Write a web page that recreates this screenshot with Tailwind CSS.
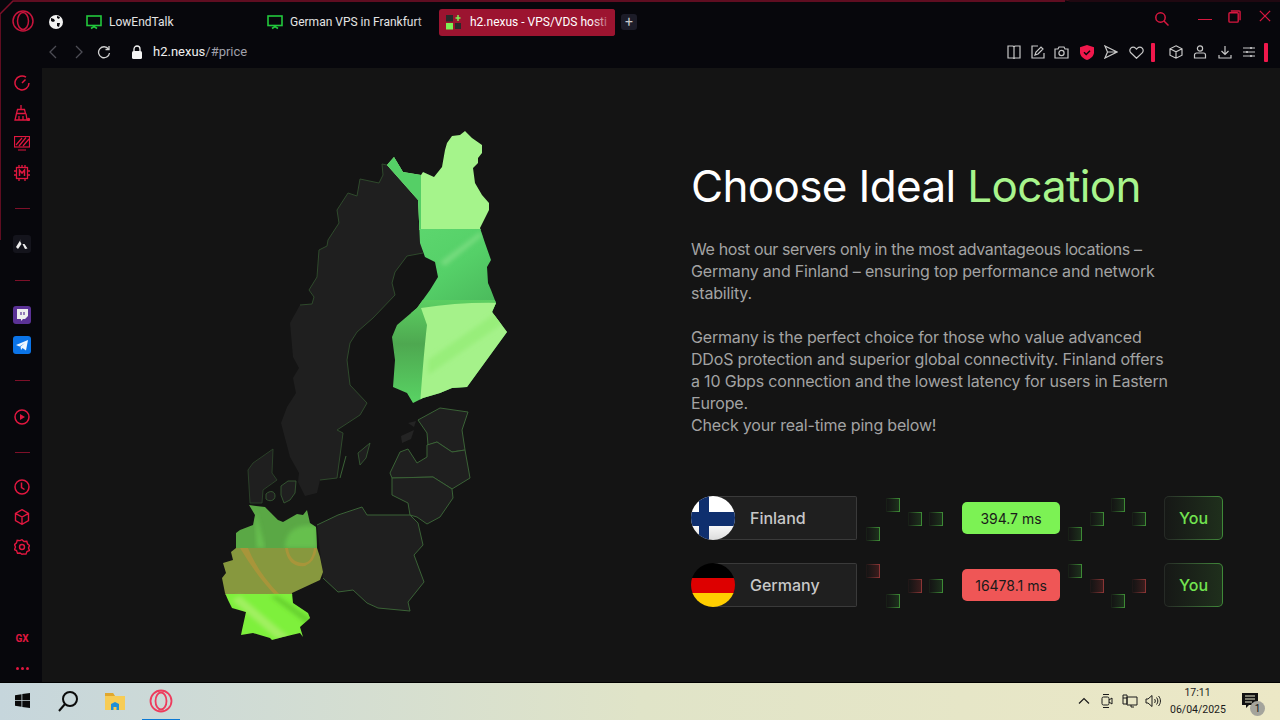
<!doctype html>
<html lang="en">
  <head>
    <meta charset="UTF-8" />
    <meta name="viewport" content="width=device-width, initial-scale=1.0" />
    <title>h2.nexus - VPS/VDS hosting</title>
    <script src="https://cdn.jsdelivr.net/npm/@tailwindcss/browser@4"></script>
  </head>
  <body class="relative w-[1280px] h-[720px] overflow-hidden bg-[#07070c] font-['Roboto',sans-serif]">
    <!-- window frame line -->
    <svg class="absolute left-0 top-0 pointer-events-none" width="1280" height="240" fill="none">
      <path d="M0 240V14L13 1H1065" stroke="#7d1029" stroke-width="1.5" />
      <path d="M1065 0L1070 1H1280" stroke="#3a0a16" />
    </svg>

    <!-- Tab bar -->
    <div class="flex items-center h-[36px] pt-[8px] text-[12px]">
      <svg class="ml-[12px] -mt-[3px] shrink-0" width="22" height="22" viewBox="0 0 22 22" fill="none" stroke="#c8143c" stroke-width="1.5">
        <ellipse cx="11" cy="11" rx="10" ry="10" /><ellipse cx="11" cy="11" rx="5.5" ry="8.5" />
      </svg>
      <svg class="ml-[15px] shrink-0" width="14" height="14" viewBox="0 0 14 14">
        <circle cx="7" cy="7" r="7" fill="#f2f2f2" />
        <path d="M2 3l3 1 1 2-2 1-2-1zM8 1l3 1-1 2-2-1zM8 8l3 0-1 4-2-1z" fill="#07070c" />
      </svg>
      <div class="flex items-center w-[181px] ml-[23px] shrink-0 text-[#e4e4e4]">
        <svg width="16" height="16" viewBox="0 0 16 16" fill="none" stroke="#22c83c" stroke-width="1.6"><rect x="1" y="2" width="14" height="9.5" /><path d="M5 14.5l3-2 3 2" /></svg>
        <span class="ml-[7px]">LowEndTalk</span>
      </div>
      <div class="relative flex items-center w-[172px] shrink-0 text-[#e4e4e4] overflow-hidden">
        <svg class="shrink-0" width="16" height="16" viewBox="0 0 16 16" fill="none" stroke="#22c83c" stroke-width="1.6"><rect x="1" y="2" width="14" height="9.5" /><path d="M5 14.5l3-2 3 2" /></svg>
        <span class="ml-[7px] whitespace-nowrap">German VPS in Frankfurt</span>
        <div class="absolute right-0 top-0 bottom-0 w-[24px] bg-gradient-to-r from-transparent to-[#07070c]"></div>
      </div>
      <div class="relative flex items-center w-[176px] h-[27px] shrink-0 rounded-[3px] bg-[#9c1430] text-white overflow-hidden pl-[7px]">
        <svg class="shrink-0" width="16" height="16" viewBox="0 0 16 16">
          <rect x="0" y="1" width="7" height="6.5" fill="#2a2a2a" /><rect x="9" y="9" width="6" height="6" fill="#2a2a2a" />
          <rect x="0" y="9" width="7" height="6.5" fill="#7cf254" />
          <path d="M12 1v6M9.5 4h5" stroke="#7cf254" stroke-width="1.5" />
        </svg>
        <span class="ml-[8px] whitespace-nowrap">h2.nexus - VPS/VDS hosti</span>
        <div class="absolute right-0 top-0 bottom-0 w-[24px] bg-gradient-to-r from-transparent to-[#9c1430]"></div>
      </div>
      <div class="flex items-center justify-center w-[16px] h-[16px] ml-[6px] rounded-[3px] bg-[#1c1c28] text-[#c8c8c8] text-[14px] leading-none">+</div>
      <div class="flex items-center ml-auto -mt-[6px]">
        <svg width="14" height="14" viewBox="0 0 14 14" fill="none" stroke="#d8173f" stroke-width="1.5"><circle cx="5.5" cy="5.5" r="4.700" /><path d="M9 9l4.500 4.500" /></svg>
        <div class="w-[14px] h-[1.5px] bg-[#d8173f] ml-[29px] mt-[1px]"></div>
        <svg class="ml-[16px] -mt-[6px]" width="13" height="13" viewBox="0 0 14 14" fill="none" stroke="#d8173f" stroke-width="1.5"><rect x="1" y="3" width="10" height="10" rx="1" /><path d="M3 1h9a1 1 0 0 1 1 1v9" /></svg>
        <svg class="ml-[18px] mr-[9px] -mt-[7px]" width="12" height="12" viewBox="0 0 14 14" fill="none" stroke="#d8173f" stroke-width="1.5"><path d="M1 1l12 12M13 1L1 13" /></svg>
      </div>
    </div>

    <!-- Address bar -->
    <div class="flex items-center h-[32px] text-[13px]">
      <svg class="ml-[48px]" width="10" height="14" viewBox="0 0 10 14" fill="none" stroke="#4d4d55" stroke-width="1.3"><path d="M8 1L2 7l6 6" /></svg>
      <svg class="ml-[16px]" width="10" height="14" viewBox="0 0 10 14" fill="none" stroke="#4d4d55" stroke-width="1.3"><path d="M2 1l6 6-6 6" /></svg>
      <svg class="ml-[13px]" width="14" height="14" viewBox="0 0 14 14" fill="none" stroke="#d0d0d0" stroke-width="1.3"><path d="M11.5 4A5.5 5.5 0 1 0 12.5 8" /><path d="M8.5 4.500h3.500V1" /></svg>
      <svg class="ml-[20px]" width="12" height="14" viewBox="0 0 12 14"><path d="M3 6V4a3 3 0 0 1 6 0v2" fill="none" stroke="#f4f4f4" stroke-width="1.3" /><rect x="1" y="6" width="10" height="8" rx="1.5" fill="#f4f4f4" /></svg>
      <div class="ml-[10px] text-[#f0f0f0]">h2.nexus<span class="text-[#a0a0aa]">/#price</span></div>
      <div class="flex items-center ml-auto mr-[12px]">
        <!-- book -->
        <svg width="14" height="14" viewBox="0 0 14 14" fill="none" stroke="#c8c8c8" stroke-width="1.2"><path d="M1 1h5l1 1 1-1h5v12H8l-1 .5L6 13H1zM7 2v11" /></svg>
        <!-- note -->
        <svg class="ml-[10px]" width="14" height="14" viewBox="0 0 14 14" fill="none" stroke="#c8c8c8" stroke-width="1.2"><path d="M7 1H1v12h12V8" /><path d="M4 10l1-3 5-5 2 2-5 5z" /></svg>
        <!-- camera -->
        <svg class="ml-[9px]" width="15" height="13" viewBox="0 0 15 13" fill="none" stroke="#c8c8c8" stroke-width="1.2"><path d="M1 3h3l1-2h5l1 2h3v9H1z" /><circle cx="7.5" cy="7" r="2.6" /></svg>
        <!-- shield -->
        <svg class="ml-[11px]" width="14" height="15" viewBox="0 0 14 15"><path d="M7 0l7 2.200v5c0 3.600-3 6.300-7 7.800-4-1.500-7-4.200-7-7.800v-5z" fill="#f0184c" /><path d="M4 7.300l2.200 2.200L10 5.800" fill="none" stroke="#07070c" stroke-width="1.500" /></svg>
        <!-- send -->
        <svg class="ml-[10px]" width="14" height="14" viewBox="0 0 14 14" fill="none" stroke="#c8c8c8" stroke-width="1.2"><path d="M1 1l12 6-12 6 2.500-6zM3.500 7H13" /></svg>
        <!-- heart -->
        <svg class="ml-[11px]" width="15" height="13" viewBox="0 0 15 13" fill="none" stroke="#c8c8c8" stroke-width="1.2"><path d="M7.500 12.300L1.800 6.800a3.300 3.300 0 0 1 4.700-4.700l1 1 1-1a3.300 3.300 0 0 1 4.700 4.700z" /></svg>
        <div class="w-[4px] h-[19px] ml-[7px] rounded-[1px] bg-[#f0184c]"></div>
        <!-- cube -->
        <svg class="ml-[14px]" width="14" height="14" viewBox="0 0 14 14" fill="none" stroke="#c8c8c8" stroke-width="1.2"><path d="M7 .8l6 3v6.400l-6 3-6-3V3.800zM1 3.800l6 3 6-3M7 6.800v6.400" /></svg>
        <!-- user -->
        <svg class="ml-[10px]" width="14" height="14" viewBox="0 0 14 14" fill="none" stroke="#c8c8c8" stroke-width="1.2"><circle cx="7" cy="3.500" r="2.600" /><path d="M1.500 13V10a2 2 0 0 1 2-2h7a2 2 0 0 1 2 2v3z" /></svg>
        <!-- download -->
        <svg class="ml-[11px]" width="14" height="14" viewBox="0 0 14 14" fill="none" stroke="#c8c8c8" stroke-width="1.2"><path d="M7 1v8M3.500 6L7 9.500 10.500 6M1 10v3h12v-3" /></svg>
        <!-- sliders -->
        <svg class="ml-[10px]" width="14" height="14" viewBox="0 0 14 14" fill="none" stroke="#c8c8c8" stroke-width="1.2"><path d="M1 3h12M1 7h12M1 11h12" /><path d="M9 2v2M5 6v2M9 10v2" stroke-width="1.600" /></svg>
        <div class="w-[4px] h-[19px] ml-[8px] rounded-[1px] bg-[#f0184c]"></div>
      </div>
    </div>

    <div class="flex h-[614px]">
      <!-- Sidebar -->
      <aside class="w-[42px] pl-[2px] shrink-0 flex flex-col items-center text-[#e0173f]">
        <div class="flex items-center justify-center h-[30px]"><svg width="16" height="16" viewBox="0 0 16 16" fill="none" stroke="#e0173f" stroke-width="1.500"><path d="M15 8a7 7 0 1 1-3-5.800M8 8l3.500-3.500" /></svg></div>
        <div class="flex items-center justify-center h-[30px]"><svg width="16" height="16" viewBox="0 0 16 16" fill="none" stroke="#e0173f" stroke-width="1.300"><path d="M7 0v4M3.500 4.500h7l1 4h-9zM2.500 8.500L1 15h12l-1-6.500M5 11v4M9 11v4" /><circle cx="14.500" cy="14.500" r="1" fill="#e0173f" /></svg></div>
        <div class="flex items-center justify-center h-[30px]"><svg width="16" height="15" viewBox="0 0 16 15" fill="none" stroke="#e0173f" stroke-width="1.200"><rect x=".5" y=".5" width="15" height="10.500" /><path d="M2 9l6-7M5 10l7-8.500M9 10l6-7M4 14h8" /></svg></div>
        <div class="flex items-center justify-center h-[30px]"><svg width="16" height="16" viewBox="0 0 16 16" fill="none" stroke="#e0173f" stroke-width="1.300"><rect x="2.500" y="2.500" width="11" height="11" /><path d="M5 0v2.500M8 0v2.500M11 0v2.500M5 13.500V16M11 13.500V16M0 6h2.500M0 10h2.500M13.500 6H16M13.500 10H16" /><path d="M5.500 11V5l2.500 3 2.500-3v6" stroke-width="1.500" /></svg></div>
        <div class="flex items-center justify-center h-[40px]"><div class="w-[15px] h-[1px] bg-[#7d1029]"></div></div>
        <div class="flex items-center justify-center h-[32px]">
          <div class="flex items-center justify-center w-[18px] h-[18px] rounded-[3px] bg-[#14141c]"><svg width="12" height="10" viewBox="0 0 12 10"><path d="M5 0L0 8l2 2 3.500-5L4 2zM6.500 5l2 0 3 4.500L9 10z" fill="#eeeeee" /></svg></div>
        </div>
        <div class="flex items-center justify-center h-[40px]"><div class="w-[15px] h-[1px] bg-[#7d1029]"></div></div>
        <div class="flex items-center justify-center h-[30px]">
          <div class="flex items-center justify-center w-[18px] h-[18px] rounded-[3px] bg-[#5b3296]"><svg width="12" height="12" viewBox="0 0 12 12"><path d="M1 0h11v7l-3 3H7l-2 2V10H1z" fill="#eeeeee" /><path d="M5 3v3M8 3v3" stroke="#5b3296" stroke-width="1.200" /></svg></div>
        </div>
        <div class="flex items-center justify-center h-[30px]">
          <div class="flex items-center justify-center w-[18px] h-[18px] rounded-[3px] bg-[#0b74e8]"><svg width="12" height="11" viewBox="0 0 12 11"><path d="M0 5l12-5-2 10.500L6.500 8 5 10l-.5-3.500L9 3 3.500 6.500z" fill="#eef6ff" /></svg></div>
        </div>
        <div class="flex items-center justify-center h-[40px]"><div class="w-[15px] h-[1px] bg-[#7d1029]"></div></div>
        <div class="flex items-center justify-center h-[34px]"><svg width="16" height="16" viewBox="0 0 16 16"><circle cx="8" cy="8" r="7" fill="none" stroke="#e0173f" stroke-width="1.500" /><path d="M6 5l5 3-5 3z" fill="#e0173f" /></svg></div>
        <div class="flex items-center justify-center h-[36px]"><div class="w-[15px] h-[1px] bg-[#7d1029]"></div></div>
        <div class="flex items-center justify-center h-[34px]"><svg width="16" height="16" viewBox="0 0 16 16" fill="none" stroke="#e0173f" stroke-width="1.500"><circle cx="8" cy="8" r="7" /><path d="M7.500 3.500V8.500l3 2" /></svg></div>
        <div class="flex items-center justify-center h-[26px]"><svg width="16" height="16" viewBox="0 0 16 16" fill="none" stroke="#e0173f" stroke-width="1.400"><path d="M8 .7l6.500 3.600v7.400L8 15.300l-6.500-3.600V4.300zM1.500 4.300L8 8l6.500-3.700M8 8v7.300" /></svg></div>
        <div class="flex items-center justify-center h-[34px]"><svg width="16" height="16" viewBox="0 0 16 16" fill="none" stroke="#e0173f" stroke-width="1.400"><path d="M8 .7l2 1.800 2.800-.3.700 2.600 2 1.700-1 2.500 1 2.500-2.500 1-1 2.600-2.500-.2L8 15.300 6 14l-2.500.2-1-2.600-2-1 1-2.500-1-2.500 2-1.700.7-2.600 2.800.3z" /><circle cx="8" cy="8" r="2.500" /></svg></div>
        <div class="flex items-center justify-center h-[30px] mt-auto text-[10px] font-bold leading-none">GX</div>
        <div class="flex items-center justify-center gap-[2px] h-[28px]"><i class="w-[3px] h-[3px] rounded-full bg-[#e0173f]"></i><i class="w-[3px] h-[3px] rounded-full bg-[#e0173f]"></i><i class="w-[3px] h-[3px] rounded-full bg-[#e0173f]"></i></div>
      </aside>

      <!-- Page content -->
      <main class="flex-1 flex bg-[#141414] font-['Inter',sans-serif]">
        <svg class="ml-[158px] mt-[52px] shrink-0" width="320" height="530" viewBox="200 120 320 530">
          <defs>
            <clipPath id="fi"><path d="M387 165L394 157L403 172L421 175L423 172L434 177L442 167L445 150L447 143L452 136L460 135L465 131L472 138L482 145L482 153L478 158L478 163L473 168L475 183L482 195L489 203L489 210L480 228L485 243L491 260L487 267L488 283L491 290L496 303L492 312L507 332L467 387L452 388L440 393L423 398L413 403L407 393L393 387L395 360L392 337L397 325L417 308L430 290L438 277L435 262L425 257L420 243L418 200Z" /></clipPath>
            <clipPath id="de"><path d="M249 505L265 507L278 520L283 522L297 514L303 515L307 510L310 523L316 527L317 548L320 557L323 572L320 580L292 593L293 603L308 613L310 618L300 627L303 637L300 633L283 637L272 640L270 638L253 633L241 635L242 630L246 612L232 608L228 600L225 593L222 578L226 573L223 563L233 560L231 552L236 548L236 533L240 530L253 525L255 515Z" /></clipPath>
            <linearGradient id="fimid" x1="0" y1="0" x2="1" y2="1"><stop offset="0" stop-color="#5fd870" /><stop offset=".5" stop-color="#55d068" /><stop offset="1" stop-color="#48b258" /></linearGradient>
            <linearGradient id="fileft" x1="0" y1="0" x2="0" y2="1"><stop offset="0" stop-color="#5ccf62" /><stop offset=".4" stop-color="#4ea850" /><stop offset="1" stop-color="#5ad866" /></linearGradient>
            <filter id="soft"><feGaussianBlur stdDeviation="2" /></filter>
          </defs>
          <!-- Norway + Sweden -->
          <path d="M382 164L383 175L379 183L360 179L357 196L348 193L337 210L339 223L328 240L327 246L319 250L317 277L309 290L314 297L312 304L300 305L290 323L293 357L299 368L293 378L296 393L287 407L281 423L290 457L299 473L298 482L305 496L317 493L320 480L337 478L343 433L337 430L360 415L367 403L350 385L347 360L350 343L357 332L373 318L395 295L392 283L395 272L407 256L423 253L418 220L418 197L387 165Z" fill="#1f1f1f" />
          <path d="M382 164L387 165L418 197M423 253L407 256L395 272L392 283L395 295L373 318L357 332L350 343L347 360L350 385L367 403L360 415L337 430L343 433L337 478L320 480M382 164L383 175L379 183L360 179L357 196L348 193L337 210L339 223L328 240L327 246L319 250L317 277L309 290L314 297L312 304L300 305" fill="none" stroke="#2f4a2c" />
          <path d="M358 453L370 443L366 458L360 465Z" fill="#1f1f1f" stroke="#3a6236" stroke-width=".8" />
          <path d="M340 478L346 456" stroke="#3a6236" />
          <!-- Denmark -->
          <path d="M248 470L253 463L273 449L272 473L277 480L263 490L262 503L250 503Z" fill="#1f1f1f" stroke="#2f4a2c" stroke-width=".8" />
          <path d="M266 494c4-4 9-3 9 2s-6 6-9 3zM281 486l7-5 8 0-1 12-5 7-6 3-3-8z" fill="#1f1f1f" stroke="#3a6236" stroke-width=".8" />
          <!-- Poland -->
          <path d="M317 525L338 515L362 507L367 515L410 515L418 523L423 545L414 555L424 582L408 602L410 611L378 608L367 603L353 590L338 592L323 578Z" fill="#1f1f1f" />
          <path d="M317 525L338 515L362 507L367 515L410 515L418 523L423 545L414 555L424 582L408 602L410 611L378 608L367 603L353 590L338 592L323 578" fill="none" stroke="#3a6236" />
          <!-- Baltics -->
          <path d="M418 420L440 408L468 412L462 430L465 450L452 452L437 442L428 445L427 433Z" fill="#1f1f1f" stroke="#3a6236" />
          <path d="M427 445L437 442L452 452L465 450L470 478L452 489L433 477L392 478L390 473L400 452L408 449L417 463L427 457Z" fill="#1f1f1f" stroke="#3a6236" />
          <path d="M392 478L433 477L452 489L453 498L440 517L427 524L417 517L410 515L408 503L392 495Z" fill="#1f1f1f" stroke="#3a6236" />
          <path d="M408 423l8-2-2 6zM401 436l13-6-3 9-9 4z" fill="#242424" />
          <!-- Finland -->
          <g clip-path="url(#fi)">
            <rect x="385" y="130" width="125" height="100" fill="#a5f48b" />
            <rect x="385" y="130" width="36" height="100" fill="#55cf66" />
            <rect x="385" y="229" width="125" height="84" fill="url(#fimid)" />
            <path d="M440 262L480 232L482 236L445 266Z" fill="#76dc7e" filter="url(#soft)" />
            <rect x="385" y="300" width="125" height="110" fill="url(#fileft)" />
            <path d="M421 308Q460 302 500 303L510 335L465 392L420 405Q424 350 427 325Z" fill="#a5f28a" />
            <path d="M428 360L500 310L505 322L428 375Z" fill="#98ee7a" filter="url(#soft)" />
          </g>
          <!-- Germany -->
          <g clip-path="url(#de)">
            <rect x="220" y="500" width="110" height="48" fill="#5aa845" />
            <path d="M285 548c0-15 10-25 32-22v22z" fill="#66c04e" filter="url(#soft)" />
            <path d="M255 510l10 38h-8z" fill="#68c050" filter="url(#soft)" />
            <rect x="220" y="548" width="110" height="47" fill="#87983e" />
            <path d="M240 548q18 30 35 47h5q-22-22-32-47z" fill="#a8953a" />
            <path d="M285 548q3 20 20 18q10-4 12-18h-3q-2 14-10 15q-14 0-16-15z" fill="#a8953a" />
            <rect x="220" y="594" width="110" height="50" fill="#7ef03c" />
            <path d="M240 596l50 42h-14l-44-38z" fill="#a0f060" filter="url(#soft)" />
            <path d="M270 596l40 30v-8l-32-22z" fill="#66d02e" filter="url(#soft)" />
          </g>
        </svg>

        <div class="ml-[171px] pt-[90px]">
          <h1 class="text-[44px] leading-[56px] tracking-[-0.66px] text-white whitespace-nowrap">Choose Ideal <span class="text-[#a8f58c]">Location</span></h1>
          <div class="mt-[24px] text-[16px] leading-[22px] tracking-[-0.18px] text-[#a3a3a3] whitespace-nowrap">
            <p><span class="tracking-[-0.38px]">We host our servers only in the most advantageous locations –</span><br />Germany and Finland – ensuring top performance and network<br />stability.</p>
            <p class="mt-[22px]">Germany is the perfect choice for those who value advanced<br />DDoS protection and superior global connectivity. Finland offers<br />a 10 Gbps connection and the lowest latency for users in Eastern<br />Europe.<br />Check your real-time ping below!</p>
          </div>

          <div class="mt-[60px] flex flex-col gap-[23px]">
            <!-- Finland row -->
            <div class="flex items-center h-[44px]">
              <div class="relative flex items-center w-[144px] h-[44px] ml-[22px] pl-[37px] rounded-r-[2px] border border-l-0 border-[#3a3a3a] bg-[#1f1f1f] text-[16px] font-medium text-[#c8c8c8]">
                Finland
                <svg class="absolute left-[-22px] top-[-1px]" width="44" height="44" viewBox="0 0 44 44"><defs><linearGradient id="fw" x1="0" y1="0" x2="0" y2="1"><stop offset=".6" stop-color="#ffffff" /><stop offset="1" stop-color="#dcdcdc" /></linearGradient></defs><clipPath id="fc"><circle cx="22" cy="22" r="22" /></clipPath><g clip-path="url(#fc)"><rect width="44" height="44" fill="url(#fw)" /><rect x="8" width="10" height="44" fill="#0f2f6e" /><rect y="16" width="44" height="14" fill="#0f2f6e" /></g></svg>
              </div>
              <svg class="-my-2 shrink-0" width="105" height="60" viewBox="0 0 105 60" fill="none">
                <defs>
                  <linearGradient id="gf"><stop offset="0" stop-color="#2a5a2a" stop-opacity="0" /><stop offset="1" stop-color="#2f6a2c" stop-opacity=".35" /></linearGradient>
                  <linearGradient id="gs"><stop offset="0" stop-color="#3d8a35" stop-opacity=".1" /><stop offset="1" stop-color="#3d8a35" /></linearGradient>
                  <linearGradient id="rf"><stop offset="0" stop-color="#6a2a2a" stop-opacity="0" /><stop offset="1" stop-color="#7a2a2a" stop-opacity=".4" /></linearGradient>
                  <linearGradient id="rs"><stop offset="0" stop-color="#8a3535" stop-opacity=".1" /><stop offset="1" stop-color="#8a3535" /></linearGradient>
                </defs>
                <rect x="29.500" y="10.500" width="13" height="13" fill="url(#gf)" stroke="url(#gs)" />
                <rect x="51.500" y="24.500" width="13" height="13" fill="url(#gf)" stroke="url(#gs)" />
                <rect x="72.500" y="24.500" width="13" height="13" fill="url(#gf)" stroke="url(#gs)" />
                <rect x="9.500" y="39.500" width="13" height="13" fill="url(#gf)" stroke="url(#gs)" />
              </svg>
              <div class="flex items-center justify-center w-[98px] h-[32px] rounded-[5px] bg-[#7cf254] text-[14px] text-[#1a1a1a] shrink-0">394.7 ms</div>
              <svg class="-my-2 shrink-0" width="104" height="60" viewBox="0 0 104 60" fill="none">
                <rect x="30.500" y="24.500" width="13" height="13" fill="url(#gf)" stroke="url(#gs)" />
                <rect x="51.500" y="10.500" width="13" height="13" fill="url(#gf)" stroke="url(#gs)" />
                <rect x="72.500" y="24.500" width="13" height="13" fill="url(#gf)" stroke="url(#gs)" />
                <rect x="8.500" y="39.500" width="13" height="13" fill="url(#gf)" stroke="url(#gs)" />
              </svg>
              <div class="w-[59px] h-[44px] rounded-[5px] p-px bg-gradient-to-r from-[#262a26] to-[#3f8a38]">
                <div class="flex items-center justify-center h-full rounded-[4px] bg-gradient-to-r from-[#161816] to-[#1f2f1c] text-[16px] font-medium text-[#72e350]">You</div>
              </div>
            </div>
            <!-- Germany row -->
            <div class="flex items-center h-[44px]">
              <div class="relative flex items-center w-[144px] h-[44px] ml-[22px] pl-[37px] rounded-r-[2px] border border-l-0 border-[#3a3a3a] bg-[#1f1f1f] text-[16px] font-medium text-[#c8c8c8]">
                Germany
                <svg class="absolute left-[-22px] top-[-1px]" width="44" height="44" viewBox="0 0 44 44"><clipPath id="dc"><circle cx="22" cy="22" r="22" /></clipPath><g clip-path="url(#dc)"><rect width="44" height="15" fill="#000000" /><rect y="15" width="44" height="15" fill="#dd0000" /><rect y="30" width="44" height="14" fill="#ffce00" /></g></svg>
              </div>
              <svg class="-my-2 shrink-0" width="105" height="60" viewBox="0 0 105 60" fill="none">
                <rect x="9.500" y="9.500" width="13" height="13" fill="url(#rf)" stroke="url(#rs)" />
                <rect x="51.500" y="24.500" width="13" height="13" fill="url(#rf)" stroke="url(#rs)" />
                <rect x="72.500" y="24.500" width="13" height="13" fill="url(#gf)" stroke="url(#gs)" />
                <rect x="29.500" y="39.500" width="13" height="13" fill="url(#gf)" stroke="url(#gs)" />
              </svg>
              <div class="flex items-center justify-center w-[98px] h-[32px] rounded-[5px] bg-[#ef5656] text-[14px] text-[#1a1a1a] shrink-0">16478.1 ms</div>
              <svg class="-my-2 shrink-0" width="104" height="60" viewBox="0 0 104 60" fill="none">
                <rect x="8.500" y="9.500" width="13" height="13" fill="url(#gf)" stroke="url(#gs)" />
                <rect x="30.500" y="24.500" width="13" height="13" fill="url(#rf)" stroke="url(#rs)" />
                <rect x="51.500" y="39.500" width="13" height="13" fill="url(#gf)" stroke="url(#gs)" />
                <rect x="72.500" y="24.500" width="13" height="13" fill="url(#rf)" stroke="url(#rs)" />
              </svg>
              <div class="w-[59px] h-[44px] rounded-[5px] p-px bg-gradient-to-r from-[#262a26] to-[#3f8a38]">
                <div class="flex items-center justify-center h-full rounded-[4px] bg-gradient-to-r from-[#161816] to-[#1f2f1c] text-[16px] font-medium text-[#72e350]">You</div>
              </div>
            </div>
          </div>
        </div>
      </main>
    </div>

    <!-- Taskbar -->
    <footer class="flex items-center h-[38px] pb-[2px] border-t border-black bg-gradient-to-r from-[#c6d6dc] via-[#e0e4c8] to-[#ece8c6] text-[10.5px] text-[#1a1a1a]">
      <svg class="ml-[15px]" width="15" height="15" viewBox="0 0 15 15" fill="#0a0a0a"><path d="M0 2.200l6.500-1V7H0zM7.300 1l7.700-1v7H7.300zM0 7.800h6.500v6L0 12.800zM7.300 7.800H15V15l-7.700-1.100z" /></svg>
      <svg class="ml-[27px]" width="22" height="22" viewBox="0 0 22 22" fill="none" stroke="#0a0a0a" stroke-width="2"><circle cx="13" cy="9" r="7" /><path d="M8 14l-6 7" /></svg>
      <svg class="ml-[26px]" width="20" height="18" viewBox="0 0 20 18"><path d="M0 1h8l2 3h10v14H0z" fill="#f7cc55" /><path d="M0 1h8l2 3H0z" fill="#e0a72e" /><path d="M6 18v-6l4-2 4 2v6h-2.500v-3h-3v3z" fill="#1f8fd8" /></svg>
      <div class="relative flex items-center justify-center w-[38px] h-[36px] ml-[17px]">
        <svg width="24" height="24" viewBox="0 0 24 24" fill="none" stroke="#ee3b5c" stroke-width="1.800"><circle cx="12" cy="12" r="10.500" /><ellipse cx="12" cy="12" rx="5.500" ry="8.500" /></svg>
        <div class="absolute left-0 right-0 bottom-[-2px] h-[2px] bg-[#0a78d4]"></div>
      </div>
      <div class="flex items-center ml-auto">
        <svg width="12" height="7" viewBox="0 0 12 7" fill="none" stroke="#1a1a1a" stroke-width="1.200"><path d="M1 6.500l5-5 5 5" /></svg>
        <svg class="ml-[11px]" width="12" height="16" viewBox="0 0 12 16" fill="none" stroke="#1a1a1a"><rect x="1" y="4" width="7" height="8" rx="1.500" /><path d="M8 7l3-2v6l-3-2M2 1.500h6M2 14.500h6" /></svg>
        <svg class="ml-[9px]" width="16" height="14" viewBox="0 0 16 14" fill="none" stroke="#1a1a1a"><path d="M5 3h10v8H5zM1 1h4v9H1zM9 11v2h3M1 4h4" /></svg>
        <svg class="ml-[7px]" width="16" height="14" viewBox="0 0 16 14" fill="none" stroke="#1a1a1a"><path d="M1 5h2l4-3.500v11L3 9H1zM9.500 5c1 1 1 3 0 4M11.500 3.500c1.800 2 1.800 5 0 7M13.500 2c2.600 3 2.600 7 0 10" /></svg>
        <div class="ml-[9px] w-[55px] text-center leading-[17px]"><div>17:11</div><div>06/04/2025</div></div>
        <div class="relative ml-[17px] mr-[23px] w-[15px] h-[16px]">
          <svg width="16" height="16" viewBox="0 0 16 16"><path d="M0 0h16v12H7l-3 3v-3H0z" fill="#111111" /><path d="M3 3h10M3 6h10M3 9h7" stroke="#e8e8cc" /></svg>
          <div class="absolute left-[8px] top-[8px] flex items-center justify-center w-[15px] h-[15px] rounded-full bg-[#a4a49c] text-[10px] text-[#111111]">1</div>
        </div>
      </div>
    </footer>
  </body>
</html>
